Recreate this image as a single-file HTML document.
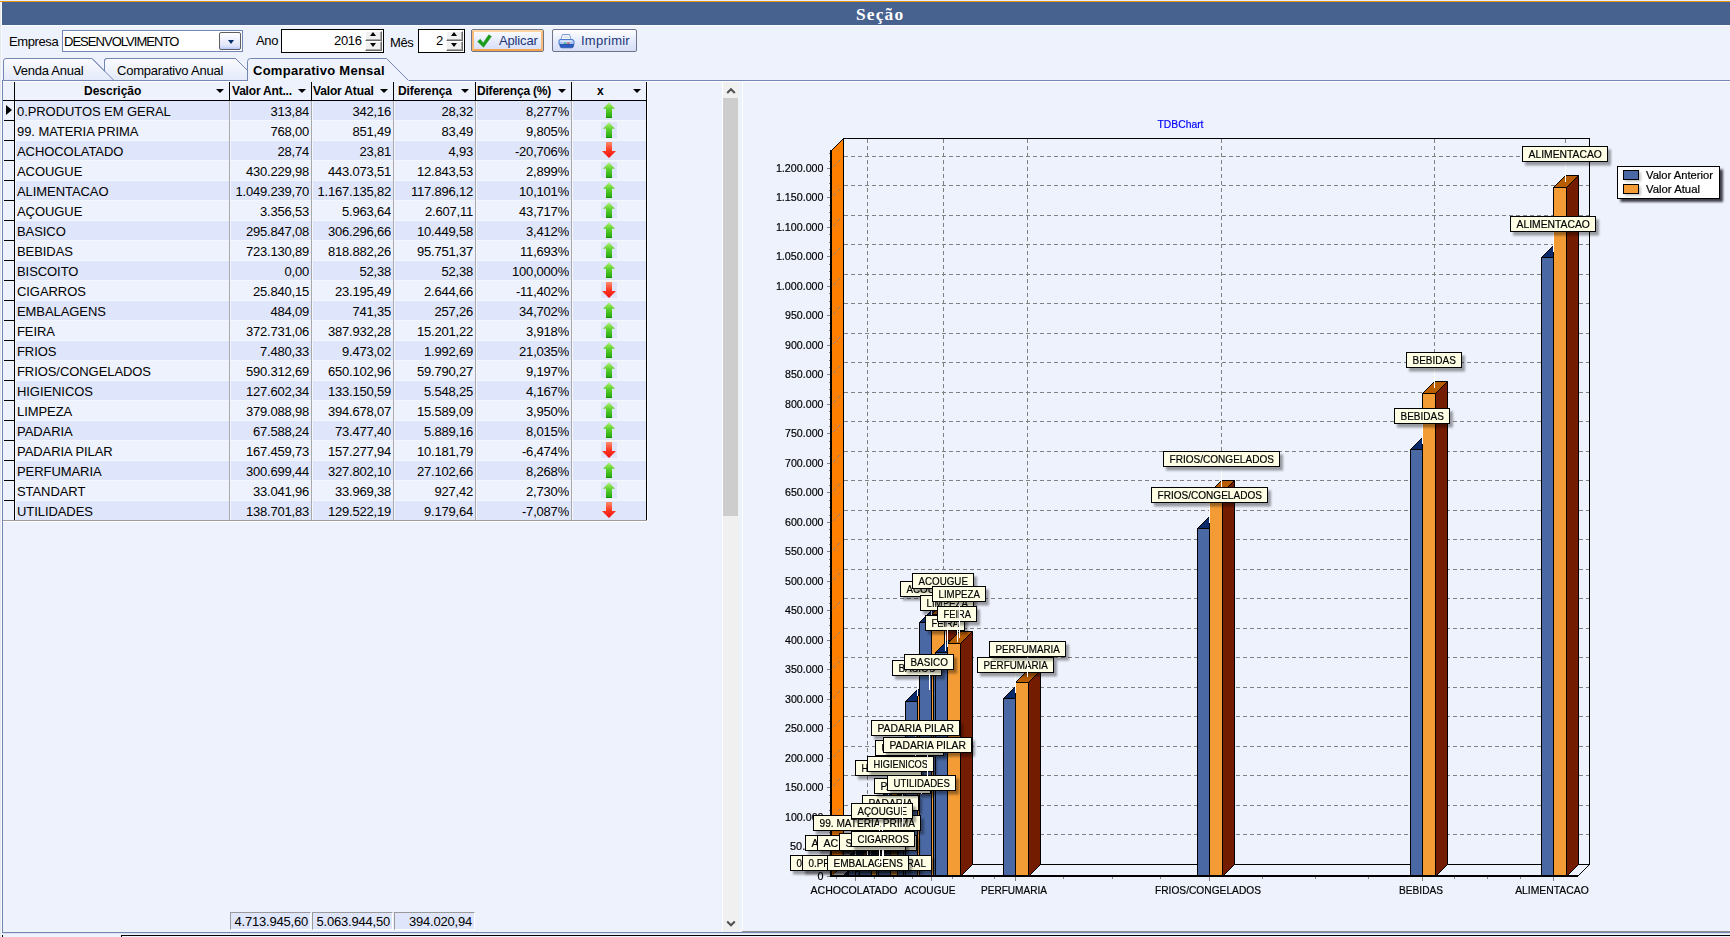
<!DOCTYPE html><html><head><meta charset="utf-8"><title>Seção</title><style>

html,body{margin:0;padding:0}
body{width:1730px;height:937px;overflow:hidden;position:relative;background:#EEF2FD;font-family:"Liberation Sans",sans-serif;font-size:13px;color:#000}
div,span{box-sizing:border-box}
.abs{position:absolute}
.t{position:absolute;white-space:nowrap;line-height:1;transform-origin:0 0}
#title{position:absolute;left:2px;top:2px;width:1728px;height:23px;background:#48628F}
#title span{position:absolute;left:854px;top:2px;font-family:"Liberation Serif",serif;font-weight:bold;font-size:17.4px;color:#fff;letter-spacing:1.15px;line-height:21px}
.hd{position:absolute;top:82px;height:18px;font-weight:bold;font-size:12px;line-height:18px;white-space:nowrap}
.cell{position:absolute;height:19px;line-height:21px;font-size:13px;white-space:nowrap;overflow:hidden}
.num{text-align:right}
.ic{position:absolute;left:0;top:0}
.dd{position:absolute;width:0;height:0;border-left:4px solid transparent;border-right:4px solid transparent;border-top:4px solid #000;top:89px}

</style></head><body>
<div class="abs" style="left:0;top:0;width:1730px;height:1px;background:#E3EFFB"></div>
<div class="abs" style="left:0;top:1px;width:1730px;height:1px;background:#EE920F"></div>
<div class="abs" style="left:0;top:2px;width:1px;height:935px;background:#E6EAEE"></div>
<div class="abs" style="left:1px;top:2px;width:1px;height:935px;background:#F8FAFD"></div>
<div id="title"><span>Seção</span></div>
<div class="abs" style="left:2px;top:25px;width:1728px;height:1px;background:#FBFCFF"></div>
<span class="t" style="left:9px;top:35px;font-size:13px;letter-spacing:-.4px">Empresa</span>
<div class="abs" style="left:62px;top:30px;width:181px;height:22px;background:#fff;border:1px solid #7286B6"></div>
<span class="t" style="left:64px;top:35px;font-size:13px;letter-spacing:-.97px">DESENVOLVIMENTO</span>
<div class="abs" style="left:219px;top:32px;width:22px;height:18px;border:1px solid #5E5E60;border-radius:2px;background:linear-gradient(#FFFFFF,#F3F5FD 30%,#DFE5F9 80%,#B9C9FC)"></div>
<div class="abs" style="left:228px;top:40px;width:0;height:0;border-left:3.7px solid transparent;border-right:3.7px solid transparent;border-top:4.2px solid #002F6C"></div>
<span class="t" style="left:256px;top:34px;font-size:13px;letter-spacing:-.3px">Ano</span>
<div class="abs" style="left:281px;top:29px;width:103px;height:24px;background:#fff;border:1px solid #000"></div>
<span class="t" style="left:334px;top:34px;font-size:13px;letter-spacing:-.3px">2016</span>
<div class="abs" style="left:365px;top:31px;width:17px;height:10px;background:#F0F0F0;border:1px solid;border-color:#fff #6A6A6A #6A6A6A #fff;box-shadow:inset -1px -1px 0 #A8A8A8"></div><div class="abs" style="left:365px;top:41px;width:17px;height:10px;background:#F0F0F0;border:1px solid;border-color:#fff #6A6A6A #6A6A6A #fff;box-shadow:inset -1px -1px 0 #A8A8A8"></div><div class="abs" style="left:370px;top:32px;width:0;height:0;border-left:3.7px solid transparent;border-right:3.7px solid transparent;border-bottom:4px solid #000"></div><div class="abs" style="left:370px;top:43px;width:0;height:0;border-left:3.7px solid transparent;border-right:3.7px solid transparent;border-top:4px solid #000"></div>
<span class="t" style="left:390px;top:36px;font-size:13px;letter-spacing:-.4px">Mês</span>
<div class="abs" style="left:418px;top:29px;width:47px;height:24px;background:#fff;border:1px solid #000"></div>
<span class="t" style="left:436px;top:34px;font-size:13px">2</span>
<div class="abs" style="left:446px;top:31px;width:17px;height:10px;background:#F0F0F0;border:1px solid;border-color:#fff #6A6A6A #6A6A6A #fff;box-shadow:inset -1px -1px 0 #A8A8A8"></div><div class="abs" style="left:446px;top:41px;width:17px;height:10px;background:#F0F0F0;border:1px solid;border-color:#fff #6A6A6A #6A6A6A #fff;box-shadow:inset -1px -1px 0 #A8A8A8"></div><div class="abs" style="left:451px;top:32px;width:0;height:0;border-left:3.7px solid transparent;border-right:3.7px solid transparent;border-bottom:4px solid #000"></div><div class="abs" style="left:451px;top:43px;width:0;height:0;border-left:3.7px solid transparent;border-right:3.7px solid transparent;border-top:4px solid #000"></div>
<div class="abs" style="left:471px;top:29px;width:73px;height:23px;border:1px solid #6F7488;border-radius:2px;background:linear-gradient(#FDFEFF,#E9EEFC 45%,#D5DDF6)"></div>
<div class="abs" style="left:472px;top:30px;width:71px;height:21px;border:2px solid;border-color:#FBD5A4 #F9BC78 #F6A54E #F9BC78;border-radius:1px"></div>
<svg class="abs" style="left:476px;top:33px" width="18" height="16" viewBox="476 33 18 16"><path d="M477.6 41.6 L480.3 39.3 L483.2 43 L488.8 34.8 L491.4 36.4 L483.6 47.2 Z" fill="#1C9E1A" stroke="#148A12" stroke-width=".5"/></svg>
<span class="t" style="left:499px;top:34px;font-size:13px;color:#1B3578;letter-spacing:-.15px">Aplicar</span>
<div class="abs" style="left:552px;top:29px;width:85px;height:23px;border:1px solid #6F7488;border-radius:2px;background:linear-gradient(#FDFEFF,#E9EEFC 45%,#D5DDF6)"></div>
<svg class="abs" style="left:558px;top:33px" width="17" height="16" viewBox="0 0 17 16"><path d="M4.5 1.5 L11.5 1.5 L13 6.5 L3 6.5 Z" fill="#fff" stroke="#7C9BD8" stroke-width="1"/><path d="M5.5 3.2h5M5 4.8h6.2" stroke="#C4CEE4" stroke-width=".8"/><path d="M2 6.5 H14 Q16 6.5 16 8.5 V11.5 H1 V8 Q1 6.5 2 6.5Z" fill="#A9C6F3" stroke="#4A78CE" stroke-width="1"/><rect x="2" y="7.3" width="12" height="1.6" rx=".8" fill="#D6E4FA"/><path d="M2 11.5 H15.5 V13 Q15.5 14.8 13.5 14.8 H4 Q2 14.8 2 13Z" fill="#2C5DC4" stroke="#234C9E" stroke-width=".7"/><rect x="6.3" y="9.6" width="2" height="1.1" fill="#22AA44"/><rect x="9.2" y="9.6" width="2.3" height="1.1" fill="#E23524"/></svg>
<span class="t" style="left:581px;top:34px;font-size:13px;color:#1B3578;letter-spacing:.25px">Imprimir</span>
<svg class="abs" style="left:0;top:56px" width="1730" height="27" viewBox="0 56 1730 27"><defs><linearGradient id="tg" x1="0" y1="0" x2="0" y2="1"><stop offset="0" stop-color="#FAFBFF"/><stop offset="1" stop-color="#E4EAFA"/></linearGradient></defs><path d="M3.5 80 L3.5 61 Q3.5 58.5 6 58.5 L92 58.5 L113.5 80" fill="url(#tg)" stroke="#7386B4" stroke-width="1"/><path d="M104.5 71 L104.5 61 Q104.5 58.5 107 58.5 L235.5 58.5 L247 70 " fill="none" stroke="#7386B4" stroke-width="1"/><path d="M105 80 L105 61 Q105 59 107 59 L235.3 59 L247.5 71 L247.5 80 Z" fill="url(#tg)" stroke="none"/><path d="M104.5 71 L104.5 61 Q104.5 58.5 107 58.5 L235.5 58.5 L247 70 " fill="none" stroke="#7386B4" stroke-width="1"/><path d="M92 58.5 L113.5 80" fill="none" stroke="#7386B4" stroke-width="1"/><path d="M2 80.5 L247.5 80.5 M409 80.5 L1730 80.5" stroke="#7386B4" stroke-width="1" fill="none"/><path d="M3 81.5 L1730 81.5" stroke="#fff" stroke-width="1" fill="none"/><path d="M247.5 82 L247.5 61.5 Q247.5 58.5 250.5 58.5 L386.5 58.5 L408.5 80.5 L409 82 Z" fill="#EEF2FD" stroke="none"/><path d="M247.5 81 L247.5 61.5 Q247.5 58.5 250.5 58.5 L386.5 58.5 L408.5 80.5" fill="none" stroke="#7386B4" stroke-width="1"/></svg><span class="t" style="left:13px;top:64px;font-size:13px;letter-spacing:-.25px">Venda Anual</span><span class="t" style="left:117px;top:64px;font-size:13px;letter-spacing:-.22px">Comparativo Anual</span><span class="t" style="left:253px;top:64px;font-size:13px;font-weight:bold;letter-spacing:.27px">Comparativo Mensal</span>
<div class="abs" style="left:2px;top:80px;width:1px;height:853px;background:#7386B4"></div>
<div class="abs" style="left:2px;top:932px;width:1728px;height:1px;background:#7386B4"></div>
<div class="abs" style="left:0;top:933px;width:1730px;height:1px;background:#DEE2EE"></div>
<div class="abs" style="left:121px;top:935px;width:1609px;height:1px;background:#000"></div>
<div class="abs" style="left:121px;top:935px;width:1px;height:2px;background:#000"></div>
<div class="abs" style="left:2px;top:935px;width:1px;height:2px;background:#000"></div>
<div class="abs" style="left:3px;top:82px;width:643px;height:18px;background:#EEF2FD"></div><div class="abs" style="left:3px;top:100px;width:644px;height:1px;background:#000"></div><div class="abs" style="left:14px;top:82px;width:1px;height:439px;background:#000"></div><div class="abs" style="left:229px;top:82px;width:1px;height:18px;background:#000"></div><div class="abs" style="left:311px;top:82px;width:1px;height:18px;background:#000"></div><div class="abs" style="left:393px;top:82px;width:1px;height:18px;background:#000"></div><div class="abs" style="left:475px;top:82px;width:1px;height:18px;background:#000"></div><div class="abs" style="left:571px;top:82px;width:1px;height:18px;background:#000"></div><div class="abs" style="left:646px;top:82px;width:1px;height:18px;background:#000"></div><span class="hd" style="left:84px;letter-spacing:0.00px">Descrição</span><span class="hd" style="left:232px;letter-spacing:-0.20px">Valor Ant...</span><span class="hd" style="left:313px;letter-spacing:-0.15px">Valor Atual</span><span class="hd" style="left:398px;letter-spacing:-0.10px">Diferença</span><span class="hd" style="left:477px;letter-spacing:-0.20px">Diferença (%)</span><span class="hd" style="left:597px;letter-spacing:0.00px">x</span><div class="dd" style="left:216px"></div><div class="dd" style="left:298px"></div><div class="dd" style="left:380px"></div><div class="dd" style="left:461px"></div><div class="dd" style="left:558px"></div><div class="dd" style="left:633px"></div><div class="abs" style="left:16px;top:101px;width:630px;height:19px;background:#DFE6FB"></div><div class="abs" style="left:16px;top:120px;width:630px;height:1px;background:#F4F7FE"></div><div class="abs" style="left:4px;top:120px;width:10px;height:1px;background:#000"></div><span class="cell" style="left:17px;top:101px;width:212px;letter-spacing:-.07px">0.PRODUTOS EM GERAL</span><span class="cell num" style="left:230px;top:101px;width:79px;letter-spacing:-.2px">313,84</span><span class="cell num" style="left:312px;top:101px;width:79px;letter-spacing:-.2px">342,16</span><span class="cell num" style="left:394px;top:101px;width:79px;letter-spacing:-.2px">28,32</span><span class="cell num" style="left:476px;top:101px;width:93px;letter-spacing:-.2px">8,277%</span><div class="abs" style="left:601px;top:102px;width:16px;height:16px"><svg class="ic" width="16" height="16" viewBox="0 0 16 16"><defs><linearGradient id="gu" x1="0" y1="0" x2="0" y2="1"><stop offset="0" stop-color="#B6F27C"/><stop offset=".42" stop-color="#5FD12C"/><stop offset="1" stop-color="#22A80E"/></linearGradient></defs><path d="M8 0.3 L14 6.8 L11 6.8 L11 16 L5 16 L5 6.8 L2 6.8 Z" fill="url(#gu)"/><path d="M5 15.5h6" stroke="#139007" stroke-width="1"/></svg></div><div class="abs" style="left:16px;top:140px;width:630px;height:1px;background:#F4F7FE"></div><div class="abs" style="left:4px;top:140px;width:10px;height:1px;background:#000"></div><span class="cell" style="left:17px;top:121px;width:212px;letter-spacing:-.07px">99. MATERIA PRIMA</span><span class="cell num" style="left:230px;top:121px;width:79px;letter-spacing:-.2px">768,00</span><span class="cell num" style="left:312px;top:121px;width:79px;letter-spacing:-.2px">851,49</span><span class="cell num" style="left:394px;top:121px;width:79px;letter-spacing:-.2px">83,49</span><span class="cell num" style="left:476px;top:121px;width:93px;letter-spacing:-.2px">9,805%</span><div class="abs" style="left:601px;top:122px;width:16px;height:16px;background:#DFE6FB"></div><div class="abs" style="left:601px;top:122px;width:16px;height:16px"><svg class="ic" width="16" height="16" viewBox="0 0 16 16"><defs><linearGradient id="gu" x1="0" y1="0" x2="0" y2="1"><stop offset="0" stop-color="#B6F27C"/><stop offset=".42" stop-color="#5FD12C"/><stop offset="1" stop-color="#22A80E"/></linearGradient></defs><path d="M8 0.3 L14 6.8 L11 6.8 L11 16 L5 16 L5 6.8 L2 6.8 Z" fill="url(#gu)"/><path d="M5 15.5h6" stroke="#139007" stroke-width="1"/></svg></div><div class="abs" style="left:16px;top:141px;width:630px;height:19px;background:#DFE6FB"></div><div class="abs" style="left:16px;top:160px;width:630px;height:1px;background:#F4F7FE"></div><div class="abs" style="left:4px;top:160px;width:10px;height:1px;background:#000"></div><span class="cell" style="left:17px;top:141px;width:212px;letter-spacing:-.07px">ACHOCOLATADO</span><span class="cell num" style="left:230px;top:141px;width:79px;letter-spacing:-.2px">28,74</span><span class="cell num" style="left:312px;top:141px;width:79px;letter-spacing:-.2px">23,81</span><span class="cell num" style="left:394px;top:141px;width:79px;letter-spacing:-.2px">4,93</span><span class="cell num" style="left:476px;top:141px;width:93px;letter-spacing:-.2px">-20,706%</span><div class="abs" style="left:601px;top:142px;width:16px;height:16px"><svg class="ic" width="16" height="16" viewBox="0 0 16 16"><defs><linearGradient id="gd" x1="0" y1="0" x2="0" y2="1"><stop offset="0" stop-color="#FF8A6E"/><stop offset=".5" stop-color="#FF3A22"/><stop offset="1" stop-color="#F01010"/></linearGradient></defs><path d="M5 0 L11 0 L11 9 L15 9 L8 16 L1 9 L5 9 Z" fill="url(#gd)"/></svg></div><div class="abs" style="left:16px;top:180px;width:630px;height:1px;background:#F4F7FE"></div><div class="abs" style="left:4px;top:180px;width:10px;height:1px;background:#000"></div><span class="cell" style="left:17px;top:161px;width:212px;letter-spacing:-.07px">ACOUGUE</span><span class="cell num" style="left:230px;top:161px;width:79px;letter-spacing:-.2px">430.229,98</span><span class="cell num" style="left:312px;top:161px;width:79px;letter-spacing:-.2px">443.073,51</span><span class="cell num" style="left:394px;top:161px;width:79px;letter-spacing:-.2px">12.843,53</span><span class="cell num" style="left:476px;top:161px;width:93px;letter-spacing:-.2px">2,899%</span><div class="abs" style="left:601px;top:162px;width:16px;height:16px;background:#DFE6FB"></div><div class="abs" style="left:601px;top:162px;width:16px;height:16px"><svg class="ic" width="16" height="16" viewBox="0 0 16 16"><defs><linearGradient id="gu" x1="0" y1="0" x2="0" y2="1"><stop offset="0" stop-color="#B6F27C"/><stop offset=".42" stop-color="#5FD12C"/><stop offset="1" stop-color="#22A80E"/></linearGradient></defs><path d="M8 0.3 L14 6.8 L11 6.8 L11 16 L5 16 L5 6.8 L2 6.8 Z" fill="url(#gu)"/><path d="M5 15.5h6" stroke="#139007" stroke-width="1"/></svg></div><div class="abs" style="left:16px;top:181px;width:630px;height:19px;background:#DFE6FB"></div><div class="abs" style="left:16px;top:200px;width:630px;height:1px;background:#F4F7FE"></div><div class="abs" style="left:4px;top:200px;width:10px;height:1px;background:#000"></div><span class="cell" style="left:17px;top:181px;width:212px;letter-spacing:-.07px">ALIMENTACAO</span><span class="cell num" style="left:230px;top:181px;width:79px;letter-spacing:-.2px">1.049.239,70</span><span class="cell num" style="left:312px;top:181px;width:79px;letter-spacing:-.2px">1.167.135,82</span><span class="cell num" style="left:394px;top:181px;width:79px;letter-spacing:-.2px">117.896,12</span><span class="cell num" style="left:476px;top:181px;width:93px;letter-spacing:-.2px">10,101%</span><div class="abs" style="left:601px;top:182px;width:16px;height:16px"><svg class="ic" width="16" height="16" viewBox="0 0 16 16"><defs><linearGradient id="gu" x1="0" y1="0" x2="0" y2="1"><stop offset="0" stop-color="#B6F27C"/><stop offset=".42" stop-color="#5FD12C"/><stop offset="1" stop-color="#22A80E"/></linearGradient></defs><path d="M8 0.3 L14 6.8 L11 6.8 L11 16 L5 16 L5 6.8 L2 6.8 Z" fill="url(#gu)"/><path d="M5 15.5h6" stroke="#139007" stroke-width="1"/></svg></div><div class="abs" style="left:16px;top:220px;width:630px;height:1px;background:#F4F7FE"></div><div class="abs" style="left:4px;top:220px;width:10px;height:1px;background:#000"></div><span class="cell" style="left:17px;top:201px;width:212px;letter-spacing:-.07px">AÇOUGUE</span><span class="cell num" style="left:230px;top:201px;width:79px;letter-spacing:-.2px">3.356,53</span><span class="cell num" style="left:312px;top:201px;width:79px;letter-spacing:-.2px">5.963,64</span><span class="cell num" style="left:394px;top:201px;width:79px;letter-spacing:-.2px">2.607,11</span><span class="cell num" style="left:476px;top:201px;width:93px;letter-spacing:-.2px">43,717%</span><div class="abs" style="left:601px;top:202px;width:16px;height:16px;background:#DFE6FB"></div><div class="abs" style="left:601px;top:202px;width:16px;height:16px"><svg class="ic" width="16" height="16" viewBox="0 0 16 16"><defs><linearGradient id="gu" x1="0" y1="0" x2="0" y2="1"><stop offset="0" stop-color="#B6F27C"/><stop offset=".42" stop-color="#5FD12C"/><stop offset="1" stop-color="#22A80E"/></linearGradient></defs><path d="M8 0.3 L14 6.8 L11 6.8 L11 16 L5 16 L5 6.8 L2 6.8 Z" fill="url(#gu)"/><path d="M5 15.5h6" stroke="#139007" stroke-width="1"/></svg></div><div class="abs" style="left:16px;top:221px;width:630px;height:19px;background:#DFE6FB"></div><div class="abs" style="left:16px;top:240px;width:630px;height:1px;background:#F4F7FE"></div><div class="abs" style="left:4px;top:240px;width:10px;height:1px;background:#000"></div><span class="cell" style="left:17px;top:221px;width:212px;letter-spacing:-.07px">BASICO</span><span class="cell num" style="left:230px;top:221px;width:79px;letter-spacing:-.2px">295.847,08</span><span class="cell num" style="left:312px;top:221px;width:79px;letter-spacing:-.2px">306.296,66</span><span class="cell num" style="left:394px;top:221px;width:79px;letter-spacing:-.2px">10.449,58</span><span class="cell num" style="left:476px;top:221px;width:93px;letter-spacing:-.2px">3,412%</span><div class="abs" style="left:601px;top:222px;width:16px;height:16px"><svg class="ic" width="16" height="16" viewBox="0 0 16 16"><defs><linearGradient id="gu" x1="0" y1="0" x2="0" y2="1"><stop offset="0" stop-color="#B6F27C"/><stop offset=".42" stop-color="#5FD12C"/><stop offset="1" stop-color="#22A80E"/></linearGradient></defs><path d="M8 0.3 L14 6.8 L11 6.8 L11 16 L5 16 L5 6.8 L2 6.8 Z" fill="url(#gu)"/><path d="M5 15.5h6" stroke="#139007" stroke-width="1"/></svg></div><div class="abs" style="left:16px;top:260px;width:630px;height:1px;background:#F4F7FE"></div><div class="abs" style="left:4px;top:260px;width:10px;height:1px;background:#000"></div><span class="cell" style="left:17px;top:241px;width:212px;letter-spacing:-.07px">BEBIDAS</span><span class="cell num" style="left:230px;top:241px;width:79px;letter-spacing:-.2px">723.130,89</span><span class="cell num" style="left:312px;top:241px;width:79px;letter-spacing:-.2px">818.882,26</span><span class="cell num" style="left:394px;top:241px;width:79px;letter-spacing:-.2px">95.751,37</span><span class="cell num" style="left:476px;top:241px;width:93px;letter-spacing:-.2px">11,693%</span><div class="abs" style="left:601px;top:242px;width:16px;height:16px;background:#DFE6FB"></div><div class="abs" style="left:601px;top:242px;width:16px;height:16px"><svg class="ic" width="16" height="16" viewBox="0 0 16 16"><defs><linearGradient id="gu" x1="0" y1="0" x2="0" y2="1"><stop offset="0" stop-color="#B6F27C"/><stop offset=".42" stop-color="#5FD12C"/><stop offset="1" stop-color="#22A80E"/></linearGradient></defs><path d="M8 0.3 L14 6.8 L11 6.8 L11 16 L5 16 L5 6.8 L2 6.8 Z" fill="url(#gu)"/><path d="M5 15.5h6" stroke="#139007" stroke-width="1"/></svg></div><div class="abs" style="left:16px;top:261px;width:630px;height:19px;background:#DFE6FB"></div><div class="abs" style="left:16px;top:280px;width:630px;height:1px;background:#F4F7FE"></div><div class="abs" style="left:4px;top:280px;width:10px;height:1px;background:#000"></div><span class="cell" style="left:17px;top:261px;width:212px;letter-spacing:-.07px">BISCOITO</span><span class="cell num" style="left:230px;top:261px;width:79px;letter-spacing:-.2px">0,00</span><span class="cell num" style="left:312px;top:261px;width:79px;letter-spacing:-.2px">52,38</span><span class="cell num" style="left:394px;top:261px;width:79px;letter-spacing:-.2px">52,38</span><span class="cell num" style="left:476px;top:261px;width:93px;letter-spacing:-.2px">100,000%</span><div class="abs" style="left:601px;top:262px;width:16px;height:16px"><svg class="ic" width="16" height="16" viewBox="0 0 16 16"><defs><linearGradient id="gu" x1="0" y1="0" x2="0" y2="1"><stop offset="0" stop-color="#B6F27C"/><stop offset=".42" stop-color="#5FD12C"/><stop offset="1" stop-color="#22A80E"/></linearGradient></defs><path d="M8 0.3 L14 6.8 L11 6.8 L11 16 L5 16 L5 6.8 L2 6.8 Z" fill="url(#gu)"/><path d="M5 15.5h6" stroke="#139007" stroke-width="1"/></svg></div><div class="abs" style="left:16px;top:300px;width:630px;height:1px;background:#F4F7FE"></div><div class="abs" style="left:4px;top:300px;width:10px;height:1px;background:#000"></div><span class="cell" style="left:17px;top:281px;width:212px;letter-spacing:-.07px">CIGARROS</span><span class="cell num" style="left:230px;top:281px;width:79px;letter-spacing:-.2px">25.840,15</span><span class="cell num" style="left:312px;top:281px;width:79px;letter-spacing:-.2px">23.195,49</span><span class="cell num" style="left:394px;top:281px;width:79px;letter-spacing:-.2px">2.644,66</span><span class="cell num" style="left:476px;top:281px;width:93px;letter-spacing:-.2px">-11,402%</span><div class="abs" style="left:601px;top:282px;width:16px;height:16px;background:#DFE6FB"></div><div class="abs" style="left:601px;top:282px;width:16px;height:16px"><svg class="ic" width="16" height="16" viewBox="0 0 16 16"><defs><linearGradient id="gd" x1="0" y1="0" x2="0" y2="1"><stop offset="0" stop-color="#FF8A6E"/><stop offset=".5" stop-color="#FF3A22"/><stop offset="1" stop-color="#F01010"/></linearGradient></defs><path d="M5 0 L11 0 L11 9 L15 9 L8 16 L1 9 L5 9 Z" fill="url(#gd)"/></svg></div><div class="abs" style="left:16px;top:301px;width:630px;height:19px;background:#DFE6FB"></div><div class="abs" style="left:16px;top:320px;width:630px;height:1px;background:#F4F7FE"></div><div class="abs" style="left:4px;top:320px;width:10px;height:1px;background:#000"></div><span class="cell" style="left:17px;top:301px;width:212px;letter-spacing:-.07px">EMBALAGENS</span><span class="cell num" style="left:230px;top:301px;width:79px;letter-spacing:-.2px">484,09</span><span class="cell num" style="left:312px;top:301px;width:79px;letter-spacing:-.2px">741,35</span><span class="cell num" style="left:394px;top:301px;width:79px;letter-spacing:-.2px">257,26</span><span class="cell num" style="left:476px;top:301px;width:93px;letter-spacing:-.2px">34,702%</span><div class="abs" style="left:601px;top:302px;width:16px;height:16px"><svg class="ic" width="16" height="16" viewBox="0 0 16 16"><defs><linearGradient id="gu" x1="0" y1="0" x2="0" y2="1"><stop offset="0" stop-color="#B6F27C"/><stop offset=".42" stop-color="#5FD12C"/><stop offset="1" stop-color="#22A80E"/></linearGradient></defs><path d="M8 0.3 L14 6.8 L11 6.8 L11 16 L5 16 L5 6.8 L2 6.8 Z" fill="url(#gu)"/><path d="M5 15.5h6" stroke="#139007" stroke-width="1"/></svg></div><div class="abs" style="left:16px;top:340px;width:630px;height:1px;background:#F4F7FE"></div><div class="abs" style="left:4px;top:340px;width:10px;height:1px;background:#000"></div><span class="cell" style="left:17px;top:321px;width:212px;letter-spacing:-.07px">FEIRA</span><span class="cell num" style="left:230px;top:321px;width:79px;letter-spacing:-.2px">372.731,06</span><span class="cell num" style="left:312px;top:321px;width:79px;letter-spacing:-.2px">387.932,28</span><span class="cell num" style="left:394px;top:321px;width:79px;letter-spacing:-.2px">15.201,22</span><span class="cell num" style="left:476px;top:321px;width:93px;letter-spacing:-.2px">3,918%</span><div class="abs" style="left:601px;top:322px;width:16px;height:16px;background:#DFE6FB"></div><div class="abs" style="left:601px;top:322px;width:16px;height:16px"><svg class="ic" width="16" height="16" viewBox="0 0 16 16"><defs><linearGradient id="gu" x1="0" y1="0" x2="0" y2="1"><stop offset="0" stop-color="#B6F27C"/><stop offset=".42" stop-color="#5FD12C"/><stop offset="1" stop-color="#22A80E"/></linearGradient></defs><path d="M8 0.3 L14 6.8 L11 6.8 L11 16 L5 16 L5 6.8 L2 6.8 Z" fill="url(#gu)"/><path d="M5 15.5h6" stroke="#139007" stroke-width="1"/></svg></div><div class="abs" style="left:16px;top:341px;width:630px;height:19px;background:#DFE6FB"></div><div class="abs" style="left:16px;top:360px;width:630px;height:1px;background:#F4F7FE"></div><div class="abs" style="left:4px;top:360px;width:10px;height:1px;background:#000"></div><span class="cell" style="left:17px;top:341px;width:212px;letter-spacing:-.07px">FRIOS</span><span class="cell num" style="left:230px;top:341px;width:79px;letter-spacing:-.2px">7.480,33</span><span class="cell num" style="left:312px;top:341px;width:79px;letter-spacing:-.2px">9.473,02</span><span class="cell num" style="left:394px;top:341px;width:79px;letter-spacing:-.2px">1.992,69</span><span class="cell num" style="left:476px;top:341px;width:93px;letter-spacing:-.2px">21,035%</span><div class="abs" style="left:601px;top:342px;width:16px;height:16px"><svg class="ic" width="16" height="16" viewBox="0 0 16 16"><defs><linearGradient id="gu" x1="0" y1="0" x2="0" y2="1"><stop offset="0" stop-color="#B6F27C"/><stop offset=".42" stop-color="#5FD12C"/><stop offset="1" stop-color="#22A80E"/></linearGradient></defs><path d="M8 0.3 L14 6.8 L11 6.8 L11 16 L5 16 L5 6.8 L2 6.8 Z" fill="url(#gu)"/><path d="M5 15.5h6" stroke="#139007" stroke-width="1"/></svg></div><div class="abs" style="left:16px;top:380px;width:630px;height:1px;background:#F4F7FE"></div><div class="abs" style="left:4px;top:380px;width:10px;height:1px;background:#000"></div><span class="cell" style="left:17px;top:361px;width:212px;letter-spacing:-.07px">FRIOS/CONGELADOS</span><span class="cell num" style="left:230px;top:361px;width:79px;letter-spacing:-.2px">590.312,69</span><span class="cell num" style="left:312px;top:361px;width:79px;letter-spacing:-.2px">650.102,96</span><span class="cell num" style="left:394px;top:361px;width:79px;letter-spacing:-.2px">59.790,27</span><span class="cell num" style="left:476px;top:361px;width:93px;letter-spacing:-.2px">9,197%</span><div class="abs" style="left:601px;top:362px;width:16px;height:16px;background:#DFE6FB"></div><div class="abs" style="left:601px;top:362px;width:16px;height:16px"><svg class="ic" width="16" height="16" viewBox="0 0 16 16"><defs><linearGradient id="gu" x1="0" y1="0" x2="0" y2="1"><stop offset="0" stop-color="#B6F27C"/><stop offset=".42" stop-color="#5FD12C"/><stop offset="1" stop-color="#22A80E"/></linearGradient></defs><path d="M8 0.3 L14 6.8 L11 6.8 L11 16 L5 16 L5 6.8 L2 6.8 Z" fill="url(#gu)"/><path d="M5 15.5h6" stroke="#139007" stroke-width="1"/></svg></div><div class="abs" style="left:16px;top:381px;width:630px;height:19px;background:#DFE6FB"></div><div class="abs" style="left:16px;top:400px;width:630px;height:1px;background:#F4F7FE"></div><div class="abs" style="left:4px;top:400px;width:10px;height:1px;background:#000"></div><span class="cell" style="left:17px;top:381px;width:212px;letter-spacing:-.07px">HIGIENICOS</span><span class="cell num" style="left:230px;top:381px;width:79px;letter-spacing:-.2px">127.602,34</span><span class="cell num" style="left:312px;top:381px;width:79px;letter-spacing:-.2px">133.150,59</span><span class="cell num" style="left:394px;top:381px;width:79px;letter-spacing:-.2px">5.548,25</span><span class="cell num" style="left:476px;top:381px;width:93px;letter-spacing:-.2px">4,167%</span><div class="abs" style="left:601px;top:382px;width:16px;height:16px"><svg class="ic" width="16" height="16" viewBox="0 0 16 16"><defs><linearGradient id="gu" x1="0" y1="0" x2="0" y2="1"><stop offset="0" stop-color="#B6F27C"/><stop offset=".42" stop-color="#5FD12C"/><stop offset="1" stop-color="#22A80E"/></linearGradient></defs><path d="M8 0.3 L14 6.8 L11 6.8 L11 16 L5 16 L5 6.8 L2 6.8 Z" fill="url(#gu)"/><path d="M5 15.5h6" stroke="#139007" stroke-width="1"/></svg></div><div class="abs" style="left:16px;top:420px;width:630px;height:1px;background:#F4F7FE"></div><div class="abs" style="left:4px;top:420px;width:10px;height:1px;background:#000"></div><span class="cell" style="left:17px;top:401px;width:212px;letter-spacing:-.07px">LIMPEZA</span><span class="cell num" style="left:230px;top:401px;width:79px;letter-spacing:-.2px">379.088,98</span><span class="cell num" style="left:312px;top:401px;width:79px;letter-spacing:-.2px">394.678,07</span><span class="cell num" style="left:394px;top:401px;width:79px;letter-spacing:-.2px">15.589,09</span><span class="cell num" style="left:476px;top:401px;width:93px;letter-spacing:-.2px">3,950%</span><div class="abs" style="left:601px;top:402px;width:16px;height:16px;background:#DFE6FB"></div><div class="abs" style="left:601px;top:402px;width:16px;height:16px"><svg class="ic" width="16" height="16" viewBox="0 0 16 16"><defs><linearGradient id="gu" x1="0" y1="0" x2="0" y2="1"><stop offset="0" stop-color="#B6F27C"/><stop offset=".42" stop-color="#5FD12C"/><stop offset="1" stop-color="#22A80E"/></linearGradient></defs><path d="M8 0.3 L14 6.8 L11 6.8 L11 16 L5 16 L5 6.8 L2 6.8 Z" fill="url(#gu)"/><path d="M5 15.5h6" stroke="#139007" stroke-width="1"/></svg></div><div class="abs" style="left:16px;top:421px;width:630px;height:19px;background:#DFE6FB"></div><div class="abs" style="left:16px;top:440px;width:630px;height:1px;background:#F4F7FE"></div><div class="abs" style="left:4px;top:440px;width:10px;height:1px;background:#000"></div><span class="cell" style="left:17px;top:421px;width:212px;letter-spacing:-.07px">PADARIA</span><span class="cell num" style="left:230px;top:421px;width:79px;letter-spacing:-.2px">67.588,24</span><span class="cell num" style="left:312px;top:421px;width:79px;letter-spacing:-.2px">73.477,40</span><span class="cell num" style="left:394px;top:421px;width:79px;letter-spacing:-.2px">5.889,16</span><span class="cell num" style="left:476px;top:421px;width:93px;letter-spacing:-.2px">8,015%</span><div class="abs" style="left:601px;top:422px;width:16px;height:16px"><svg class="ic" width="16" height="16" viewBox="0 0 16 16"><defs><linearGradient id="gu" x1="0" y1="0" x2="0" y2="1"><stop offset="0" stop-color="#B6F27C"/><stop offset=".42" stop-color="#5FD12C"/><stop offset="1" stop-color="#22A80E"/></linearGradient></defs><path d="M8 0.3 L14 6.8 L11 6.8 L11 16 L5 16 L5 6.8 L2 6.8 Z" fill="url(#gu)"/><path d="M5 15.5h6" stroke="#139007" stroke-width="1"/></svg></div><div class="abs" style="left:16px;top:460px;width:630px;height:1px;background:#F4F7FE"></div><div class="abs" style="left:4px;top:460px;width:10px;height:1px;background:#000"></div><span class="cell" style="left:17px;top:441px;width:212px;letter-spacing:-.07px">PADARIA PILAR</span><span class="cell num" style="left:230px;top:441px;width:79px;letter-spacing:-.2px">167.459,73</span><span class="cell num" style="left:312px;top:441px;width:79px;letter-spacing:-.2px">157.277,94</span><span class="cell num" style="left:394px;top:441px;width:79px;letter-spacing:-.2px">10.181,79</span><span class="cell num" style="left:476px;top:441px;width:93px;letter-spacing:-.2px">-6,474%</span><div class="abs" style="left:601px;top:442px;width:16px;height:16px;background:#DFE6FB"></div><div class="abs" style="left:601px;top:442px;width:16px;height:16px"><svg class="ic" width="16" height="16" viewBox="0 0 16 16"><defs><linearGradient id="gd" x1="0" y1="0" x2="0" y2="1"><stop offset="0" stop-color="#FF8A6E"/><stop offset=".5" stop-color="#FF3A22"/><stop offset="1" stop-color="#F01010"/></linearGradient></defs><path d="M5 0 L11 0 L11 9 L15 9 L8 16 L1 9 L5 9 Z" fill="url(#gd)"/></svg></div><div class="abs" style="left:16px;top:461px;width:630px;height:19px;background:#DFE6FB"></div><div class="abs" style="left:16px;top:480px;width:630px;height:1px;background:#F4F7FE"></div><div class="abs" style="left:4px;top:480px;width:10px;height:1px;background:#000"></div><span class="cell" style="left:17px;top:461px;width:212px;letter-spacing:-.07px">PERFUMARIA</span><span class="cell num" style="left:230px;top:461px;width:79px;letter-spacing:-.2px">300.699,44</span><span class="cell num" style="left:312px;top:461px;width:79px;letter-spacing:-.2px">327.802,10</span><span class="cell num" style="left:394px;top:461px;width:79px;letter-spacing:-.2px">27.102,66</span><span class="cell num" style="left:476px;top:461px;width:93px;letter-spacing:-.2px">8,268%</span><div class="abs" style="left:601px;top:462px;width:16px;height:16px"><svg class="ic" width="16" height="16" viewBox="0 0 16 16"><defs><linearGradient id="gu" x1="0" y1="0" x2="0" y2="1"><stop offset="0" stop-color="#B6F27C"/><stop offset=".42" stop-color="#5FD12C"/><stop offset="1" stop-color="#22A80E"/></linearGradient></defs><path d="M8 0.3 L14 6.8 L11 6.8 L11 16 L5 16 L5 6.8 L2 6.8 Z" fill="url(#gu)"/><path d="M5 15.5h6" stroke="#139007" stroke-width="1"/></svg></div><div class="abs" style="left:16px;top:500px;width:630px;height:1px;background:#F4F7FE"></div><div class="abs" style="left:4px;top:500px;width:10px;height:1px;background:#000"></div><span class="cell" style="left:17px;top:481px;width:212px;letter-spacing:-.07px">STANDART</span><span class="cell num" style="left:230px;top:481px;width:79px;letter-spacing:-.2px">33.041,96</span><span class="cell num" style="left:312px;top:481px;width:79px;letter-spacing:-.2px">33.969,38</span><span class="cell num" style="left:394px;top:481px;width:79px;letter-spacing:-.2px">927,42</span><span class="cell num" style="left:476px;top:481px;width:93px;letter-spacing:-.2px">2,730%</span><div class="abs" style="left:601px;top:482px;width:16px;height:16px;background:#DFE6FB"></div><div class="abs" style="left:601px;top:482px;width:16px;height:16px"><svg class="ic" width="16" height="16" viewBox="0 0 16 16"><defs><linearGradient id="gu" x1="0" y1="0" x2="0" y2="1"><stop offset="0" stop-color="#B6F27C"/><stop offset=".42" stop-color="#5FD12C"/><stop offset="1" stop-color="#22A80E"/></linearGradient></defs><path d="M8 0.3 L14 6.8 L11 6.8 L11 16 L5 16 L5 6.8 L2 6.8 Z" fill="url(#gu)"/><path d="M5 15.5h6" stroke="#139007" stroke-width="1"/></svg></div><div class="abs" style="left:16px;top:501px;width:630px;height:19px;background:#DFE6FB"></div><div class="abs" style="left:16px;top:520px;width:630px;height:1px;background:#F4F7FE"></div><div class="abs" style="left:4px;top:520px;width:10px;height:1px;background:#000"></div><span class="cell" style="left:17px;top:501px;width:212px;letter-spacing:-.07px">UTILIDADES</span><span class="cell num" style="left:230px;top:501px;width:79px;letter-spacing:-.2px">138.701,83</span><span class="cell num" style="left:312px;top:501px;width:79px;letter-spacing:-.2px">129.522,19</span><span class="cell num" style="left:394px;top:501px;width:79px;letter-spacing:-.2px">9.179,64</span><span class="cell num" style="left:476px;top:501px;width:93px;letter-spacing:-.2px">-7,087%</span><div class="abs" style="left:601px;top:502px;width:16px;height:16px"><svg class="ic" width="16" height="16" viewBox="0 0 16 16"><defs><linearGradient id="gd" x1="0" y1="0" x2="0" y2="1"><stop offset="0" stop-color="#FF8A6E"/><stop offset=".5" stop-color="#FF3A22"/><stop offset="1" stop-color="#F01010"/></linearGradient></defs><path d="M5 0 L11 0 L11 9 L15 9 L8 16 L1 9 L5 9 Z" fill="url(#gd)"/></svg></div><div class="abs" style="left:229px;top:101px;width:1px;height:419px;background:#A9A9A9"></div><div class="abs" style="left:230px;top:101px;width:1px;height:419px;background:#F4F7FE"></div><div class="abs" style="left:311px;top:101px;width:1px;height:419px;background:#A9A9A9"></div><div class="abs" style="left:312px;top:101px;width:1px;height:419px;background:#F4F7FE"></div><div class="abs" style="left:393px;top:101px;width:1px;height:419px;background:#A9A9A9"></div><div class="abs" style="left:394px;top:101px;width:1px;height:419px;background:#F4F7FE"></div><div class="abs" style="left:475px;top:101px;width:1px;height:419px;background:#A9A9A9"></div><div class="abs" style="left:476px;top:101px;width:1px;height:419px;background:#F4F7FE"></div><div class="abs" style="left:571px;top:101px;width:1px;height:419px;background:#A9A9A9"></div><div class="abs" style="left:572px;top:101px;width:1px;height:419px;background:#F4F7FE"></div><div class="abs" style="left:15px;top:101px;width:1px;height:419px;background:#F4F7FE"></div><div class="abs" style="left:646px;top:82px;width:1px;height:439px;background:#000"></div><div class="abs" style="left:647px;top:82px;width:1px;height:440px;background:#fff"></div><div class="abs" style="left:3px;top:520px;width:644px;height:1px;background:#9C9C9C"></div><div class="abs" style="left:3px;top:521px;width:645px;height:1px;background:#fff"></div><div class="abs" style="left:6px;top:105px;width:0;height:0;border-top:5.5px solid transparent;border-bottom:5.5px solid transparent;border-left:6px solid #000"></div>
<div class="abs" style="left:230px;top:912px;width:81px;height:18px;background:#DFE6FB;border:1px solid;border-color:#9A9A9A #fff #fff #9A9A9A"></div>
<span class="t" style="left:232px;top:915px;width:76px;text-align:right;font-size:13px;letter-spacing:-.2px">4.713.945,60</span>
<div class="abs" style="left:312px;top:912px;width:81px;height:18px;background:#DFE6FB;border:1px solid;border-color:#9A9A9A #fff #fff #9A9A9A"></div>
<span class="t" style="left:314px;top:915px;width:76px;text-align:right;font-size:13px;letter-spacing:-.2px">5.063.944,50</span>
<div class="abs" style="left:394px;top:912px;width:81px;height:18px;background:#DFE6FB;border:1px solid;border-color:#9A9A9A #fff #fff #9A9A9A"></div>
<span class="t" style="left:396px;top:915px;width:76px;text-align:right;font-size:13px;letter-spacing:-.2px">394.020,94</span>
<div class="abs" style="left:722px;top:82px;width:1px;height:850px;background:#fff"></div>
<div class="abs" style="left:723px;top:82px;width:16px;height:850px;background:#F0F0F0"></div>
<div class="abs" style="left:723px;top:98px;width:15px;height:418px;background:#CDCDCD"></div>
<svg class="abs" style="left:723px;top:82px" width="17" height="17"><path d="M4.2 11 L8 7.2 L11.8 11" fill="none" stroke="#505050" stroke-width="2"/></svg>
<svg class="abs" style="left:723px;top:915px" width="17" height="17"><path d="M4.2 6.5 L8 10.3 L11.8 6.5" fill="none" stroke="#505050" stroke-width="2"/></svg>
<div class="abs" style="left:742px;top:82px;width:1px;height:850px;background:#fff"></div>
<div class="abs" style="left:742px;top:931px;width:988px;height:1px;background:#8E8E8E"></div>
<svg class="abs" style="left:743px;top:82px;will-change:transform" width="987" height="849" viewBox="743 82 987 849" font-family="Liberation Sans, sans-serif" font-size="11" fill="#000"><defs><filter id="sh" x="-10%" y="-40%" width="120%" height="190%"><feGaussianBlur stdDeviation="1.2"/></filter><filter id="sh2" x="-10%" y="-20%" width="120%" height="150%"><feGaussianBlur stdDeviation="1.3"/></filter><style>.s{fill:#00000A;fill-opacity:.36;filter:url(#sh)}.m{fill:#FFFFE6;stroke:#000;stroke-width:1}.b path{stroke:#000;stroke-width:1}text{stroke:#000;stroke-width:.2px}text.ti{stroke:#00f}</style></defs><text class="ti" x="1157.5" y="128" fill="#0000FF" lengthAdjust="spacingAndGlyphs" textLength="46">TDBChart</text><path d="M844 834.5H1589M844 805.5H1589M844 775.5H1589M844 746.5H1589M844 716.5H1589M844 687.5H1589M844 657.5H1589M844 628.5H1589M844 598.5H1589M844 569.5H1589M844 539.5H1589M844 510.5H1589M844 480.5H1589M844 451.5H1589M844 421.5H1589M844 392.5H1589M844 362.5H1589M844 333.5H1589M844 303.5H1589M844 274.5H1589M844 244.5H1589M844 215.5H1589M844 185.5H1589M844 156.5H1589M867.5 139V864M943.5 139V864M1027.5 139V864M1221.5 139V864M1434.5 139V864M1565.5 139V864" stroke="#808080" stroke-dasharray="4 3" fill="none" shape-rendering="crispEdges"/><path d="M831.5 876.5 L843.5 864.5 H1589.5 L1577.5 876.5" fill="none" stroke="#000"/><path d="M843 138.5H1589.5V864.5" stroke="#000" fill="none" shape-rendering="crispEdges"/><path d="M831.5 150.5 L843.5 138.5 V864.5 L831.5 876.5 Z" fill="#FF8000" stroke="#000"/><path d="M833 875L835.5 872.5M837.5 870.5L840.5 867.5M833 845L835.5 842.5M837.5 840.5L840.5 837.5M833 816L835.5 813.5M837.5 811.5L840.5 808.5M833 786L835.5 783.5M837.5 781.5L840.5 778.5M833 757L835.5 754.5M837.5 752.5L840.5 749.5M833 727L835.5 724.5M837.5 722.5L840.5 719.5M833 698L835.5 695.5M837.5 693.5L840.5 690.5M833 668L835.5 665.5M837.5 663.5L840.5 660.5M833 639L835.5 636.5M837.5 634.5L840.5 631.5M833 609L835.5 606.5M837.5 604.5L840.5 601.5M833 580L835.5 577.5M837.5 575.5L840.5 572.5M833 550L835.5 547.5M837.5 545.5L840.5 542.5M833 521L835.5 518.5M837.5 516.5L840.5 513.5M833 491L835.5 488.5M837.5 486.5L840.5 483.5M833 462L835.5 459.5M837.5 457.5L840.5 454.5M833 432L835.5 429.5M837.5 427.5L840.5 424.5M833 403L835.5 400.5M837.5 398.5L840.5 395.5M833 373L835.5 370.5M837.5 368.5L840.5 365.5M833 344L835.5 341.5M837.5 339.5L840.5 336.5M833 314L835.5 311.5M837.5 309.5L840.5 306.5M833 285L835.5 282.5M837.5 280.5L840.5 277.5M833 255L835.5 252.5M837.5 250.5L840.5 247.5M833 226L835.5 223.5M837.5 221.5L840.5 218.5M833 196L835.5 193.5M837.5 191.5L840.5 188.5M833 167L835.5 164.5M837.5 162.5L840.5 159.5" stroke="#8C8070" fill="none"/><path d="M827 876.5H831M829 869.5H831M829 861.5H831M829 854.5H831M827 846.5H831M829 839.5H831M829 832.5H831M829 824.5H831M827 817.5H831M829 810.5H831M829 802.5H831M829 795.5H831M827 787.5H831M829 780.5H831M829 773.5H831M829 765.5H831M827 758.5H831M829 751.5H831M829 743.5H831M829 736.5H831M827 728.5H831M829 721.5H831M829 714.5H831M829 706.5H831M827 699.5H831M829 692.5H831M829 684.5H831M829 677.5H831M827 669.5H831M829 662.5H831M829 655.5H831M829 647.5H831M827 640.5H831M829 633.5H831M829 625.5H831M829 618.5H831M827 610.5H831M829 603.5H831M829 596.5H831M829 588.5H831M827 581.5H831M829 574.5H831M829 566.5H831M829 559.5H831M827 551.5H831M829 544.5H831M829 537.5H831M829 529.5H831M827 522.5H831M829 515.5H831M829 507.5H831M829 500.5H831M827 492.5H831M829 485.5H831M829 478.5H831M829 470.5H831M827 463.5H831M829 456.5H831M829 448.5H831M829 441.5H831M827 433.5H831M829 426.5H831M829 419.5H831M829 411.5H831M827 404.5H831M829 397.5H831M829 389.5H831M829 382.5H831M827 374.5H831M829 367.5H831M829 360.5H831M829 352.5H831M827 345.5H831M829 338.5H831M829 330.5H831M829 323.5H831M827 315.5H831M829 308.5H831M829 301.5H831M829 293.5H831M827 286.5H831M829 279.5H831M829 271.5H831M829 264.5H831M827 256.5H831M829 249.5H831M829 242.5H831M829 234.5H831M827 227.5H831M829 220.5H831M829 212.5H831M829 205.5H831M827 197.5H831M829 190.5H831M829 183.5H831M829 175.5H831M827 168.5H831M829 161.5H831M829 153.5H831" stroke="#808080" fill="none" shape-rendering="crispEdges"/><path d="M831 150V877" stroke="#000" stroke-width="2" fill="none" shape-rendering="crispEdges"/><g class="b"><path d="M843.5 876.5 L855.5 864.5 H867.5 L855.5 876.5 Z" fill="#0A2B6B"/><path d="M855.5 876.5 L867.5 864.5 H880.5 L868.5 876.5 Z" fill="#B85C00"/><path d="M843.5 876.5 L855.5 864.5 H867.5 L855.5 876.5 Z" fill="#0A2B6B"/><path d="M855.5 876.5 L867.5 864.5 H880.5 L868.5 876.5 Z" fill="#B85C00"/><path d="M843.5 876.5 L855.5 864.5 H867.5 L855.5 876.5 Z" fill="#0A2B6B"/><path d="M855.5 876.5 L867.5 864.5 H880.5 L868.5 876.5 Z" fill="#B85C00"/><path d="M855.5 875.5 L867.5 863.5 V864.5 L855.5 876.5 Z" fill="#2B3F66"/><path d="M843.5 875.5H855.5V876.5H843.5Z" fill="#4A69A4"/><path d="M843.5 875.5 L855.5 863.5 H867.5 L855.5 875.5 Z" fill="#0A2B6B"/><path d="M868.5 875.5 L880.5 863.5 V864.5 L868.5 876.5 Z" fill="#731C00"/><path d="M855.5 875.5H868.5V876.5H855.5Z" fill="#F39C35"/><path d="M855.5 875.5 L867.5 863.5 H880.5 L868.5 875.5 Z" fill="#B85C00"/><path d="M844.5 876.5 L856.5 864.5 H868.5 L856.5 876.5 Z" fill="#0A2B6B"/><path d="M869.5 875.5 L881.5 863.5 V864.5 L869.5 876.5 Z" fill="#731C00"/><path d="M856.5 875.5H869.5V876.5H856.5Z" fill="#F39C35"/><path d="M856.5 875.5 L868.5 863.5 H881.5 L869.5 875.5 Z" fill="#B85C00"/><path d="M860.5 856.5 L872.5 844.5 V864.5 L860.5 876.5 Z" fill="#2B3F66"/><path d="M848.5 856.5H860.5V876.5H848.5Z" fill="#4A69A4"/><path d="M848.5 856.5 L860.5 844.5 H872.5 L860.5 856.5 Z" fill="#0A2B6B"/><path d="M873.5 856.5 L885.5 844.5 V864.5 L873.5 876.5 Z" fill="#731C00"/><path d="M860.5 856.5H873.5V876.5H860.5Z" fill="#F39C35"/><path d="M860.5 856.5 L872.5 844.5 H885.5 L873.5 856.5 Z" fill="#B85C00"/><path d="M867.5 871.5 L879.5 859.5 V864.5 L867.5 876.5 Z" fill="#2B3F66"/><path d="M855.5 871.5H867.5V876.5H855.5Z" fill="#4A69A4"/><path d="M855.5 871.5 L867.5 859.5 H879.5 L867.5 871.5 Z" fill="#0A2B6B"/><path d="M880.5 870.5 L892.5 858.5 V864.5 L880.5 876.5 Z" fill="#731C00"/><path d="M867.5 870.5H880.5V876.5H867.5Z" fill="#F39C35"/><path d="M867.5 870.5 L879.5 858.5 H892.5 L880.5 870.5 Z" fill="#B85C00"/><path d="M870.5 874.5 L882.5 862.5 V864.5 L870.5 876.5 Z" fill="#2B3F66"/><path d="M858.5 874.5H870.5V876.5H858.5Z" fill="#4A69A4"/><path d="M858.5 874.5 L870.5 862.5 H882.5 L870.5 874.5 Z" fill="#0A2B6B"/><path d="M883.5 872.5 L895.5 860.5 V864.5 L883.5 876.5 Z" fill="#731C00"/><path d="M870.5 872.5H883.5V876.5H870.5Z" fill="#F39C35"/><path d="M870.5 872.5 L882.5 860.5 H895.5 L883.5 872.5 Z" fill="#B85C00"/><path d="M871.5 861.5 L883.5 849.5 V864.5 L871.5 876.5 Z" fill="#2B3F66"/><path d="M859.5 861.5H871.5V876.5H859.5Z" fill="#4A69A4"/><path d="M859.5 861.5 L871.5 849.5 H883.5 L871.5 861.5 Z" fill="#0A2B6B"/><path d="M884.5 862.5 L896.5 850.5 V864.5 L884.5 876.5 Z" fill="#731C00"/><path d="M871.5 862.5H884.5V876.5H871.5Z" fill="#F39C35"/><path d="M871.5 862.5 L883.5 850.5 H896.5 L884.5 862.5 Z" fill="#B85C00"/><path d="M888.5 801.5 L900.5 789.5 V864.5 L888.5 876.5 Z" fill="#2B3F66"/><path d="M876.5 801.5H888.5V876.5H876.5Z" fill="#4A69A4"/><path d="M876.5 801.5 L888.5 789.5 H900.5 L888.5 801.5 Z" fill="#0A2B6B"/><path d="M901.5 797.5 L913.5 785.5 V864.5 L901.5 876.5 Z" fill="#731C00"/><path d="M888.5 797.5H901.5V876.5H888.5Z" fill="#F39C35"/><path d="M888.5 797.5 L900.5 785.5 H913.5 L901.5 797.5 Z" fill="#B85C00"/><path d="M890.5 836.5 L902.5 824.5 V864.5 L890.5 876.5 Z" fill="#2B3F66"/><path d="M878.5 836.5H890.5V876.5H878.5Z" fill="#4A69A4"/><path d="M878.5 836.5 L890.5 824.5 H902.5 L890.5 836.5 Z" fill="#0A2B6B"/><path d="M903.5 833.5 L915.5 821.5 V864.5 L903.5 876.5 Z" fill="#731C00"/><path d="M890.5 833.5H903.5V876.5H890.5Z" fill="#F39C35"/><path d="M890.5 833.5 L902.5 821.5 H915.5 L903.5 833.5 Z" fill="#B85C00"/><path d="M909.5 794.5 L921.5 782.5 V864.5 L909.5 876.5 Z" fill="#2B3F66"/><path d="M897.5 794.5H909.5V876.5H897.5Z" fill="#4A69A4"/><path d="M897.5 794.5 L909.5 782.5 H921.5 L909.5 794.5 Z" fill="#0A2B6B"/><path d="M922.5 799.5 L934.5 787.5 V864.5 L922.5 876.5 Z" fill="#731C00"/><path d="M909.5 799.5H922.5V876.5H909.5Z" fill="#F39C35"/><path d="M909.5 799.5 L921.5 787.5 H934.5 L922.5 799.5 Z" fill="#B85C00"/><path d="M915.5 777.5 L927.5 765.5 V864.5 L915.5 876.5 Z" fill="#2B3F66"/><path d="M903.5 777.5H915.5V876.5H903.5Z" fill="#4A69A4"/><path d="M903.5 777.5 L915.5 765.5 H927.5 L915.5 777.5 Z" fill="#0A2B6B"/><path d="M928.5 783.5 L940.5 771.5 V864.5 L928.5 876.5 Z" fill="#731C00"/><path d="M915.5 783.5H928.5V876.5H915.5Z" fill="#F39C35"/><path d="M915.5 783.5 L927.5 771.5 H940.5 L928.5 783.5 Z" fill="#B85C00"/><path d="M917.5 701.5 L929.5 689.5 V864.5 L917.5 876.5 Z" fill="#2B3F66"/><path d="M905.5 701.5H917.5V876.5H905.5Z" fill="#4A69A4"/><path d="M905.5 701.5 L917.5 689.5 H929.5 L917.5 701.5 Z" fill="#0A2B6B"/><path d="M930.5 695.5 L942.5 683.5 V864.5 L930.5 876.5 Z" fill="#731C00"/><path d="M917.5 695.5H930.5V876.5H917.5Z" fill="#F39C35"/><path d="M917.5 695.5 L929.5 683.5 H942.5 L930.5 695.5 Z" fill="#B85C00"/><path d="M931.5 622.5 L943.5 610.5 V864.5 L931.5 876.5 Z" fill="#2B3F66"/><path d="M919.5 622.5H931.5V876.5H919.5Z" fill="#4A69A4"/><path d="M919.5 622.5 L931.5 610.5 H943.5 L931.5 622.5 Z" fill="#0A2B6B"/><path d="M944.5 614.5 L956.5 602.5 V864.5 L944.5 876.5 Z" fill="#731C00"/><path d="M931.5 614.5H944.5V876.5H931.5Z" fill="#F39C35"/><path d="M931.5 614.5 L943.5 602.5 H956.5 L944.5 614.5 Z" fill="#B85C00"/><path d="M945.5 656.5 L957.5 644.5 V864.5 L945.5 876.5 Z" fill="#2B3F66"/><path d="M933.5 656.5H945.5V876.5H933.5Z" fill="#4A69A4"/><path d="M933.5 656.5 L945.5 644.5 H957.5 L945.5 656.5 Z" fill="#0A2B6B"/><path d="M958.5 647.5 L970.5 635.5 V864.5 L958.5 876.5 Z" fill="#731C00"/><path d="M945.5 647.5H958.5V876.5H945.5Z" fill="#F39C35"/><path d="M945.5 647.5 L957.5 635.5 H970.5 L958.5 647.5 Z" fill="#B85C00"/><path d="M947.5 652.5 L959.5 640.5 V864.5 L947.5 876.5 Z" fill="#2B3F66"/><path d="M935.5 652.5H947.5V876.5H935.5Z" fill="#4A69A4"/><path d="M935.5 652.5 L947.5 640.5 H959.5 L947.5 652.5 Z" fill="#0A2B6B"/><path d="M960.5 643.5 L972.5 631.5 V864.5 L960.5 876.5 Z" fill="#731C00"/><path d="M947.5 643.5H960.5V876.5H947.5Z" fill="#F39C35"/><path d="M947.5 643.5 L959.5 631.5 H972.5 L960.5 643.5 Z" fill="#B85C00"/><path d="M1015.5 698.5 L1027.5 686.5 V864.5 L1015.5 876.5 Z" fill="#2B3F66"/><path d="M1003.5 698.5H1015.5V876.5H1003.5Z" fill="#4A69A4"/><path d="M1003.5 698.5 L1015.5 686.5 H1027.5 L1015.5 698.5 Z" fill="#0A2B6B"/><path d="M1028.5 682.5 L1040.5 670.5 V864.5 L1028.5 876.5 Z" fill="#731C00"/><path d="M1015.5 682.5H1028.5V876.5H1015.5Z" fill="#F39C35"/><path d="M1015.5 682.5 L1027.5 670.5 H1040.5 L1028.5 682.5 Z" fill="#B85C00"/><path d="M1209.5 528.5 L1221.5 516.5 V864.5 L1209.5 876.5 Z" fill="#2B3F66"/><path d="M1197.5 528.5H1209.5V876.5H1197.5Z" fill="#4A69A4"/><path d="M1197.5 528.5 L1209.5 516.5 H1221.5 L1209.5 528.5 Z" fill="#0A2B6B"/><path d="M1222.5 492.5 L1234.5 480.5 V864.5 L1222.5 876.5 Z" fill="#731C00"/><path d="M1209.5 492.5H1222.5V876.5H1209.5Z" fill="#F39C35"/><path d="M1209.5 492.5 L1221.5 480.5 H1234.5 L1222.5 492.5 Z" fill="#B85C00"/><path d="M1422.5 449.5 L1434.5 437.5 V864.5 L1422.5 876.5 Z" fill="#2B3F66"/><path d="M1410.5 449.5H1422.5V876.5H1410.5Z" fill="#4A69A4"/><path d="M1410.5 449.5 L1422.5 437.5 H1434.5 L1422.5 449.5 Z" fill="#0A2B6B"/><path d="M1435.5 393.5 L1447.5 381.5 V864.5 L1435.5 876.5 Z" fill="#731C00"/><path d="M1422.5 393.5H1435.5V876.5H1422.5Z" fill="#F39C35"/><path d="M1422.5 393.5 L1434.5 381.5 H1447.5 L1435.5 393.5 Z" fill="#B85C00"/><path d="M1553.5 257.5 L1565.5 245.5 V864.5 L1553.5 876.5 Z" fill="#2B3F66"/><path d="M1541.5 257.5H1553.5V876.5H1541.5Z" fill="#4A69A4"/><path d="M1541.5 257.5 L1553.5 245.5 H1565.5 L1553.5 257.5 Z" fill="#0A2B6B"/><path d="M1566.5 187.5 L1578.5 175.5 V864.5 L1566.5 876.5 Z" fill="#731C00"/><path d="M1553.5 187.5H1566.5V876.5H1553.5Z" fill="#F39C35"/><path d="M1553.5 187.5 L1565.5 175.5 H1578.5 L1566.5 187.5 Z" fill="#B85C00"/></g><path d="M830 876H1578" stroke="#000" stroke-width="2" fill="none" shape-rendering="crispEdges"/><path d="M855.5 877V881M874.5 877V879M893.5 877V879M912.5 877V879M931.5 877V881M952.5 877V879M973.5 877V879M994.5 877V879M1015.5 877V881M1063.5 877V879M1112.5 877V879M1160.5 877V879M1209.5 877V881M1262.5 877V879M1315.5 877V879M1368.5 877V879M1422.5 877V881M1454.5 877V879M1487.5 877V879M1520.5 877V879M1553.5 877V881M836.5 877V879" stroke="#808080" fill="none" shape-rendering="crispEdges"/><text x="817.5" y="880.4" lengthAdjust="spacingAndGlyphs" textLength="6">0</text><text x="790" y="850.4" lengthAdjust="spacingAndGlyphs" textLength="33.5">50.000</text><text x="785" y="821.4" lengthAdjust="spacingAndGlyphs" textLength="38.5">100.000</text><text x="785" y="791.4" lengthAdjust="spacingAndGlyphs" textLength="38.5">150.000</text><text x="785" y="762.4" lengthAdjust="spacingAndGlyphs" textLength="38.5">200.000</text><text x="785" y="732.4" lengthAdjust="spacingAndGlyphs" textLength="38.5">250.000</text><text x="785" y="703.4" lengthAdjust="spacingAndGlyphs" textLength="38.5">300.000</text><text x="785" y="673.4" lengthAdjust="spacingAndGlyphs" textLength="38.5">350.000</text><text x="785" y="644.4" lengthAdjust="spacingAndGlyphs" textLength="38.5">400.000</text><text x="785" y="614.4" lengthAdjust="spacingAndGlyphs" textLength="38.5">450.000</text><text x="785" y="585.4" lengthAdjust="spacingAndGlyphs" textLength="38.5">500.000</text><text x="785" y="555.4" lengthAdjust="spacingAndGlyphs" textLength="38.5">550.000</text><text x="785" y="526.4" lengthAdjust="spacingAndGlyphs" textLength="38.5">600.000</text><text x="785" y="496.4" lengthAdjust="spacingAndGlyphs" textLength="38.5">650.000</text><text x="785" y="467.4" lengthAdjust="spacingAndGlyphs" textLength="38.5">700.000</text><text x="785" y="437.4" lengthAdjust="spacingAndGlyphs" textLength="38.5">750.000</text><text x="785" y="408.4" lengthAdjust="spacingAndGlyphs" textLength="38.5">800.000</text><text x="785" y="378.4" lengthAdjust="spacingAndGlyphs" textLength="38.5">850.000</text><text x="785" y="349.4" lengthAdjust="spacingAndGlyphs" textLength="38.5">900.000</text><text x="785" y="319.4" lengthAdjust="spacingAndGlyphs" textLength="38.5">950.000</text><text x="775.9" y="290.4" lengthAdjust="spacingAndGlyphs" textLength="47.6">1.000.000</text><text x="775.9" y="260.4" lengthAdjust="spacingAndGlyphs" textLength="47.6">1.050.000</text><text x="775.9" y="231.4" lengthAdjust="spacingAndGlyphs" textLength="47.6">1.100.000</text><text x="775.9" y="201.4" lengthAdjust="spacingAndGlyphs" textLength="47.6">1.150.000</text><text x="775.9" y="172.4" lengthAdjust="spacingAndGlyphs" textLength="47.6">1.200.000</text><text x="810.5" y="893.8" lengthAdjust="spacingAndGlyphs" textLength="87">ACHOCOLATADO</text><text x="904.5" y="893.8" lengthAdjust="spacingAndGlyphs" textLength="51">ACOUGUE</text><text x="1515.2" y="893.8" lengthAdjust="spacingAndGlyphs" textLength="73.5">ALIMENTACAO</text><text x="1399" y="893.8" lengthAdjust="spacingAndGlyphs" textLength="44">BEBIDAS</text><text x="1155" y="893.8" lengthAdjust="spacingAndGlyphs" textLength="106">FRIOS/CONGELADOS</text><text x="981" y="893.8" lengthAdjust="spacingAndGlyphs" textLength="66">PERFUMARIA</text><rect x="830" y="838.5" width="67" height="16" class="s"/><path d="M870.5 851V869" stroke="#fff"/><rect x="842" y="838.5" width="62" height="16" class="s"/><path d="M855.5 851V871" stroke="#fff"/><rect x="808" y="838.5" width="100" height="16" class="s"/><rect x="805.5" y="835.5" width="99" height="15" class="m"/><text x="811.5" y="846.8" lengthAdjust="spacingAndGlyphs" textLength="87.4">ACHOCOLATADO</text><rect x="793" y="858.5" width="130" height="16" class="s"/><rect x="790.5" y="855.5" width="129" height="15" class="m"/><text x="796.5" y="866.8" lengthAdjust="spacingAndGlyphs" textLength="117.4">0.PRODUTOS EM GERAL</text><path d="M888.5 776V796" stroke="#fff"/><rect x="858" y="763.5" width="67" height="16" class="s"/><rect x="855.5" y="760.5" width="66" height="15" class="m"/><text x="861.5" y="771.8" lengthAdjust="spacingAndGlyphs" textLength="54.4">HIGIENICOS</text><path d="M890.5 811V831" stroke="#fff"/><rect x="865" y="798.5" width="57" height="16" class="s"/><rect x="862.5" y="795.5" width="56" height="15" class="m"/><text x="868.5" y="806.8" lengthAdjust="spacingAndGlyphs" textLength="44.4">PADARIA</text><path d="M909.5 756V789" stroke="#fff"/><rect x="878" y="743.5" width="69" height="16" class="s"/><rect x="875.5" y="740.5" width="68" height="15" class="m"/><text x="881.5" y="751.8" lengthAdjust="spacingAndGlyphs" textLength="56.4">UTILIDADES</text><path d="M915.5 736V772" stroke="#fff"/><rect x="874" y="723.5" width="89" height="16" class="s"/><rect x="871.5" y="720.5" width="88" height="15" class="m"/><text x="877.5" y="731.8" lengthAdjust="spacingAndGlyphs" textLength="76.4">PADARIA PILAR</text><path d="M917.5 676V696" stroke="#fff"/><rect x="895" y="663.5" width="50" height="16" class="s"/><rect x="892.5" y="660.5" width="49" height="15" class="m"/><text x="898.5" y="671.8" lengthAdjust="spacingAndGlyphs" textLength="37.4">BASICO</text><path d="M931.5 597V617" stroke="#fff"/><rect x="903" y="584.5" width="62" height="16" class="s"/><rect x="900.5" y="581.5" width="61" height="15" class="m"/><text x="906.5" y="592.8" lengthAdjust="spacingAndGlyphs" textLength="49.4">ACOUGUE</text><path d="M945.5 631V651" stroke="#fff"/><rect x="928" y="618.5" width="40" height="16" class="s"/><rect x="925.5" y="615.5" width="39" height="15" class="m"/><text x="931.5" y="626.8" lengthAdjust="spacingAndGlyphs" textLength="27.4">FEIRA</text><path d="M947.5 611V647" stroke="#fff"/><rect x="923" y="598.5" width="54" height="16" class="s"/><rect x="920.5" y="595.5" width="53" height="15" class="m"/><text x="926.5" y="606.8" lengthAdjust="spacingAndGlyphs" textLength="41.4">LIMPEZA</text><path d="M1015.5 673V693" stroke="#fff"/><rect x="980" y="660.5" width="77" height="16" class="s"/><rect x="977.5" y="657.5" width="76" height="15" class="m"/><text x="983.5" y="668.8" lengthAdjust="spacingAndGlyphs" textLength="64.4">PERFUMARIA</text><path d="M1209.5 503V523" stroke="#fff"/><rect x="1154" y="490.5" width="117" height="16" class="s"/><rect x="1151.5" y="487.5" width="116" height="15" class="m"/><text x="1157.5" y="498.8" lengthAdjust="spacingAndGlyphs" textLength="104.4">FRIOS/CONGELADOS</text><path d="M1422.5 424V444" stroke="#fff"/><rect x="1397" y="411.5" width="56" height="16" class="s"/><rect x="1394.5" y="408.5" width="55" height="15" class="m"/><text x="1400.5" y="419.8" lengthAdjust="spacingAndGlyphs" textLength="43.4">BEBIDAS</text><path d="M1553.5 232V252" stroke="#fff"/><rect x="1513" y="219.5" width="86" height="16" class="s"/><rect x="1510.5" y="216.5" width="85" height="15" class="m"/><text x="1516.5" y="227.8" lengthAdjust="spacingAndGlyphs" textLength="73.4">ALIMENTACAO</text><path d="M867.5 851V871" stroke="#fff"/><rect x="841" y="838.5" width="59" height="16" class="s"/><path d="M879.5 819V865" stroke="#fff"/><rect x="862" y="806.5" width="40" height="16" class="s"/><path d="M867.5 851V871" stroke="#fff"/><rect x="820" y="838.5" width="100" height="16" class="s"/><rect x="817.5" y="835.5" width="99" height="15" class="m"/><text x="823.5" y="846.8" lengthAdjust="spacingAndGlyphs" textLength="87.4">ACHOCOLATADO</text><rect x="805" y="858.5" width="130" height="16" class="s"/><rect x="802.5" y="855.5" width="129" height="15" class="m"/><text x="808.5" y="866.8" lengthAdjust="spacingAndGlyphs" textLength="117.4">0.PRODUTOS EM GERAL</text><path d="M867.5 831V870" stroke="#fff"/><rect x="816" y="818.5" width="108" height="16" class="s"/><rect x="813.5" y="815.5" width="107" height="15" class="m"/><text x="819.5" y="826.8" lengthAdjust="spacingAndGlyphs" textLength="95.4">99. MATERIA PRIMA</text><rect x="830" y="858.5" width="82" height="16" class="s"/><rect x="827.5" y="855.5" width="81" height="15" class="m"/><text x="833.5" y="866.8" lengthAdjust="spacingAndGlyphs" textLength="69.4">EMBALAGENS</text><rect x="842" y="836.5" width="67" height="18" class="s"/><rect x="839.5" y="833.5" width="66" height="17" class="m"/><text x="845.5" y="846.8" lengthAdjust="spacingAndGlyphs" textLength="54.4">STANDART</text><path d="M879.5 819V865" stroke="#fff"/><path d="M882.5 819V867" stroke="#fff"/><rect x="854" y="806.5" width="62" height="16" class="s"/><rect x="851.5" y="803.5" width="61" height="15" class="m"/><text x="857.5" y="814.8" lengthAdjust="spacingAndGlyphs" textLength="49.4">AÇOUGUE</text><path d="M883.5 847V857" stroke="#fff"/><rect x="854" y="834.5" width="64" height="16" class="s"/><rect x="851.5" y="831.5" width="63" height="15" class="m"/><text x="857.5" y="842.8" lengthAdjust="spacingAndGlyphs" textLength="51.4">CIGARROS</text><path d="M900.5 772V792" stroke="#fff"/><rect x="870" y="759.5" width="67" height="16" class="s"/><rect x="867.5" y="756.5" width="66" height="15" class="m"/><text x="873.5" y="767.8" lengthAdjust="spacingAndGlyphs" textLength="54.4">HIGIENICOS</text><path d="M902.5 794V828" stroke="#fff"/><rect x="877" y="781.5" width="57" height="16" class="s"/><rect x="874.5" y="778.5" width="56" height="15" class="m"/><text x="880.5" y="789.8" lengthAdjust="spacingAndGlyphs" textLength="44.4">PADARIA</text><path d="M921.5 791V794" stroke="#fff"/><rect x="890" y="778.5" width="69" height="16" class="s"/><rect x="887.5" y="775.5" width="68" height="15" class="m"/><text x="893.5" y="786.8" lengthAdjust="spacingAndGlyphs" textLength="56.4">UTILIDADES</text><path d="M927.5 753V778" stroke="#fff"/><rect x="886" y="740.5" width="89" height="16" class="s"/><rect x="883.5" y="737.5" width="88" height="15" class="m"/><text x="889.5" y="748.8" lengthAdjust="spacingAndGlyphs" textLength="76.4">PADARIA PILAR</text><path d="M929.5 670V690" stroke="#fff"/><rect x="907" y="657.5" width="50" height="16" class="s"/><rect x="904.5" y="654.5" width="49" height="15" class="m"/><text x="910.5" y="665.8" lengthAdjust="spacingAndGlyphs" textLength="37.4">BASICO</text><path d="M943.5 589V609" stroke="#fff"/><rect x="915" y="576.5" width="62" height="16" class="s"/><rect x="912.5" y="573.5" width="61" height="15" class="m"/><text x="918.5" y="584.8" lengthAdjust="spacingAndGlyphs" textLength="49.4">ACOUGUE</text><path d="M957.5 622V642" stroke="#fff"/><rect x="940" y="609.5" width="40" height="16" class="s"/><rect x="937.5" y="606.5" width="39" height="15" class="m"/><text x="943.5" y="617.8" lengthAdjust="spacingAndGlyphs" textLength="27.4">FEIRA</text><path d="M959.5 602V638" stroke="#fff"/><rect x="935" y="589.5" width="54" height="16" class="s"/><rect x="932.5" y="586.5" width="53" height="15" class="m"/><text x="938.5" y="597.8" lengthAdjust="spacingAndGlyphs" textLength="41.4">LIMPEZA</text><path d="M1027.5 657V677" stroke="#fff"/><rect x="992" y="644.5" width="77" height="16" class="s"/><rect x="989.5" y="641.5" width="76" height="15" class="m"/><text x="995.5" y="652.8" lengthAdjust="spacingAndGlyphs" textLength="64.4">PERFUMARIA</text><path d="M1221.5 467V487" stroke="#fff"/><rect x="1166" y="454.5" width="117" height="16" class="s"/><rect x="1163.5" y="451.5" width="116" height="15" class="m"/><text x="1169.5" y="462.8" lengthAdjust="spacingAndGlyphs" textLength="104.4">FRIOS/CONGELADOS</text><path d="M1434.5 368V388" stroke="#fff"/><rect x="1409" y="355.5" width="56" height="16" class="s"/><rect x="1406.5" y="352.5" width="55" height="15" class="m"/><text x="1412.5" y="363.8" lengthAdjust="spacingAndGlyphs" textLength="43.4">BEBIDAS</text><path d="M1565.5 162V182" stroke="#fff"/><rect x="1525" y="149.5" width="86" height="16" class="s"/><rect x="1522.5" y="146.5" width="85" height="15" class="m"/><text x="1528.5" y="157.8" lengthAdjust="spacingAndGlyphs" textLength="73.4">ALIMENTACAO</text><rect x="1620.5" y="169.5" width="102.5" height="32.5" fill="#1E1E28" fill-opacity=".85" filter="url(#sh2)"/><rect x="1617.5" y="166.5" width="102" height="32" fill="#fff" stroke="#000" shape-rendering="crispEdges"/><rect x="1625" y="172.5" width="16" height="9" fill="#888" fill-opacity=".5" filter="url(#sh)"/><rect x="1623.5" y="170.5" width="15" height="9" fill="#4A69A4" stroke="#000" shape-rendering="crispEdges"/><rect x="1625" y="186.5" width="16" height="9" fill="#888" fill-opacity=".5" filter="url(#sh)"/><rect x="1623.5" y="184.5" width="15" height="9" fill="#F39C35" stroke="#000" shape-rendering="crispEdges"/><text x="1646" y="179" lengthAdjust="spacingAndGlyphs" textLength="67">Valor Anterior</text><text x="1646" y="193" lengthAdjust="spacingAndGlyphs" textLength="54">Valor Atual</text></svg>
</body></html>
